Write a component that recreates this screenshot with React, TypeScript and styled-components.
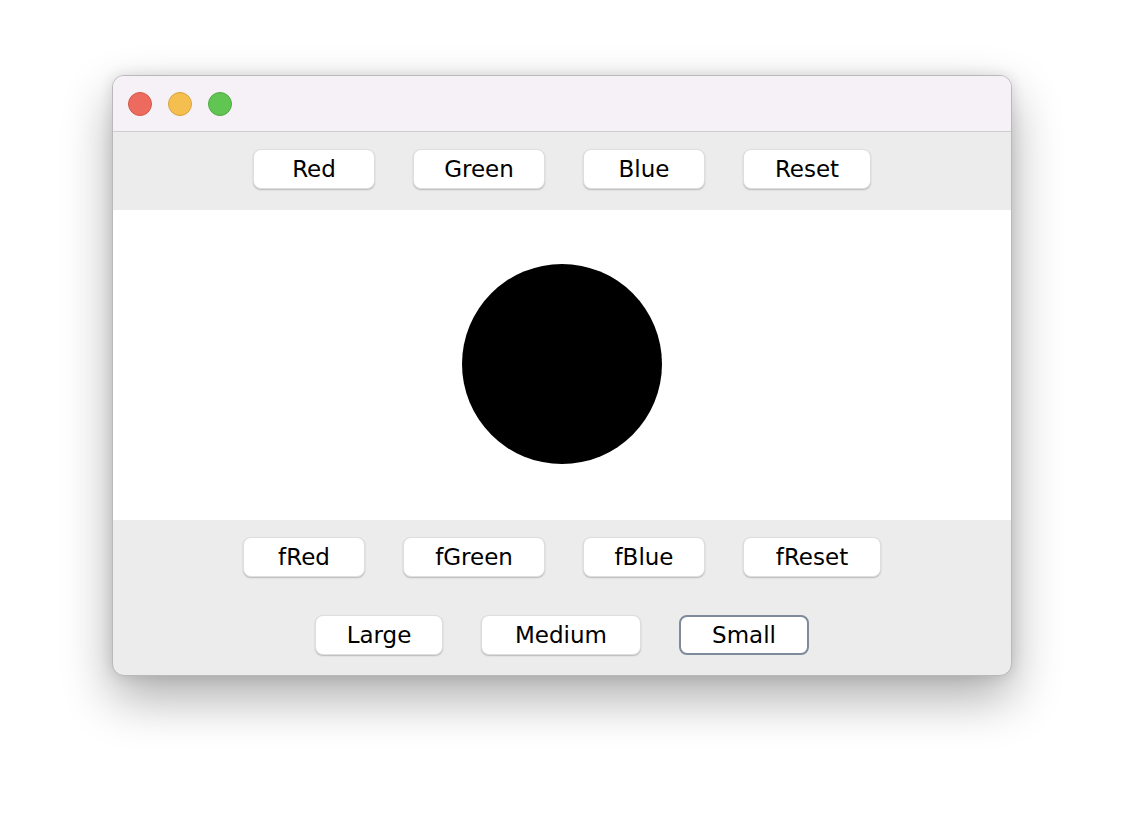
import { createGlobalStyle, styled } from 'styled-components';

const GlobalStyle = createGlobalStyle`
  html, body {
    margin: 0;
    padding: 0;
    background: #ffffff;
  }
  body {
    font-family: 'DejaVu Sans', 'Liberation Sans', sans-serif;
  }
`;

// 전체 화면
const Page = styled.div`
  width: 1124px;
  height: 824px;
  display: flex;
  justify-content: center;
  align-items: flex-start;
  padding-top: 75px;
  box-sizing: border-box;
`;

// 맥 창
const Window = styled.div`
  width: 900px;
  height: 601px;
  border-radius: 12px;
  overflow: hidden;
  background: #ececec;
  border: 1px solid #b9b9b9;
  box-sizing: border-box;
  box-shadow: 0 22px 50px rgba(0, 0, 0, 0.32), 0 0 14px rgba(0, 0, 0, 0.12);
  display: flex;
  flex-direction: column;
`;

const TitleBar = styled.div`
  height: 55px;
  flex-shrink: 0;
  background: #f6f1f7;
  border-bottom: 1px solid #cfcdd0;
  display: flex;
  align-items: center;
  gap: 16px;
  padding-left: 15px;
`;

const Light = styled.div<{ $bg: string; $line: string }>`
  width: 22px;
  height: 22px;
  border-radius: 50%;
  background: ${(p) => p.$bg};
  border: 1px solid ${(p) => p.$line};
`;

const ButtonBar = styled.div`
  height: 78px;
  flex-shrink: 0;
  display: flex;
  justify-content: center;
  align-items: flex-start;
  padding-top: 17px;
  box-sizing: border-box;
  gap: 38px;
`;

const Canvas = styled.div`
  height: 310px;
  flex-shrink: 0;
  background: #ffffff;
  display: flex;
  justify-content: center;
  align-items: center;
`;

const Dot = styled.div`
  width: 200px;
  height: 200px;
  border-radius: 50%;
  background: #000000;
  margin-top: -2px;
`;

const BottomArea = styled.div`
  flex: 1;
  display: flex;
  flex-direction: column;
  padding-top: 17px;
  gap: 38px;
`;

const ButtonRow = styled.div`
  display: flex;
  justify-content: center;
  gap: 38px;
`;

const Btn = styled.button<{ $w: number; $focus?: boolean }>`
  width: ${(p) => p.$w}px;
  height: 40px;
  box-sizing: border-box;
  background: #ffffff;
  border: ${(p) => (p.$focus ? '2px solid #7d8b9b' : '1px solid #dedede')};
  border-radius: 8px;
  box-shadow: ${(p) => (p.$focus ? 'none' : '0 1px 1.5px rgba(0, 0, 0, 0.22)')};
  font-family: 'DejaVu Sans', 'Liberation Sans', sans-serif;
  font-size: 23px;
  color: #000000;
  padding: 0;
  display: flex;
  justify-content: center;
  align-items: center;
  cursor: pointer;
`;

export default function App() {
  return (
    <Page>
      <GlobalStyle />
      <Window>
        <TitleBar>
          <Light $bg='#ed6a5e' $line='#d4584c' />
          <Light $bg='#f5bf4f' $line='#d8a33f' />
          <Light $bg='#61c554' $line='#4eaa42' />
        </TitleBar>
        <ButtonBar>
          <Btn $w={122}>Red</Btn>
          <Btn $w={132}>Green</Btn>
          <Btn $w={122}>Blue</Btn>
          <Btn $w={128}>Reset</Btn>
        </ButtonBar>
        <Canvas>
          <Dot />
        </Canvas>
        <BottomArea>
          <ButtonRow>
            <Btn $w={122}>fRed</Btn>
            <Btn $w={142}>fGreen</Btn>
            <Btn $w={122}>fBlue</Btn>
            <Btn $w={138}>fReset</Btn>
          </ButtonRow>
          <ButtonRow>
            <Btn $w={128}>Large</Btn>
            <Btn $w={160}>Medium</Btn>
            <Btn $w={130} $focus>Small</Btn>
          </ButtonRow>
        </BottomArea>
      </Window>
    </Page>
  );
}
